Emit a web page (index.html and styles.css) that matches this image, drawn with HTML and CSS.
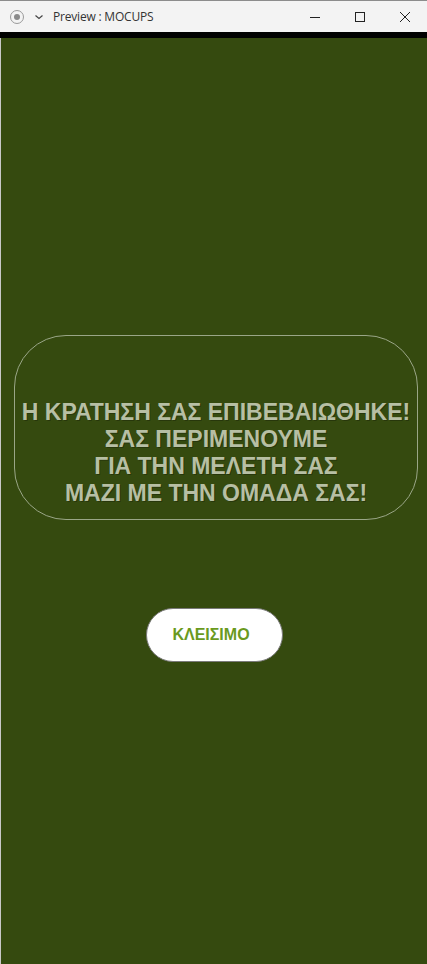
FILE: index.html
```html
<!DOCTYPE html>
<html lang="el">
<head>
<meta charset="utf-8">
<title>Preview : MOCUPS</title>
<link rel="stylesheet" href="styles.css">
</head>
<body>
<div class="window">
  <header class="titlebar">
    <div class="tb-left">
      <svg class="tb-icon" width="16" height="16" viewBox="0 0 16 16"><circle cx="8" cy="8" r="6.5" fill="none" stroke="#9a9a9a" stroke-width="1"/><circle cx="8" cy="8" r="3" fill="#8a8a8a"/></svg>
      <svg class="tb-chevron" width="10" height="10" viewBox="0 0 10 10"><path d="M1.5 3.5 L5 6.5 L8.5 3.5" fill="none" stroke="#444" stroke-width="1.2"/></svg>
      <span class="tb-title">Preview : MOCUPS</span>
    </div>
    <div class="tb-controls">
      <svg width="12" height="12" viewBox="0 0 12 12"><path d="M1 6.5 H11" stroke="#222" stroke-width="1"/></svg>
      <svg width="12" height="12" viewBox="0 0 12 12"><rect x="1.5" y="1.5" width="9" height="9" fill="none" stroke="#222" stroke-width="1"/></svg>
      <svg width="12" height="12" viewBox="0 0 12 12"><path d="M1 1 L11 11 M11 1 L1 11" stroke="#222" stroke-width="1"/></svg>
    </div>
  </header>
  <div class="blackbar"></div>
  <main class="screen">
    <section class="message">
      <p>Η ΚΡΑΤΗΣΗ ΣΑΣ ΕΠΙΒΕΒΑΙΩΘΗΚΕ!<br>ΣΑΣ ΠΕΡΙΜΕΝΟΥΜΕ<br>ΓΙΑ ΤΗΝ ΜΕΛΕΤΗ ΣΑΣ<br>ΜΑΖΙ ΜΕ ΤΗΝ ΟΜΑΔΑ ΣΑΣ!</p>
    </section>
    <button class="close-btn">ΚΛΕΙΣΙΜΟ</button>
  </main>
</div>
</body>
</html>
```
FILE: styles.css
```css
html, body {
  margin: 0;
  padding: 0;
  width: 427px;
  height: 964px;
  overflow: hidden;
  background: #354a0f;
}
.window {
  display: flex;
  flex-direction: column;
  height: 964px;
}
.titlebar {
  height: 32px;
  box-sizing: border-box;
  border-top: 1px solid #8c8c8c;
  background: #f3f3f3;
  display: flex;
  align-items: center;
  justify-content: space-between;
  font-family: "Open Sans", "Noto Sans", sans-serif;
}
.tb-left {
  display: flex;
  align-items: center;
  padding-left: 9px;
}
.tb-icon { margin-top: 1px; }
.tb-chevron { margin-left: 9px; }
.tb-title {
  margin-left: 9px;
  font-size: 12px;
  color: #333;
  letter-spacing: -0.2px;
}
.tb-controls {
  display: flex;
  align-items: center;
  gap: 33px;
  padding-right: 16px;
  margin-top: 1px;
}
.blackbar {
  height: 6px;
  background: #000;
}
.screen {
  flex: 1;
  display: flex;
  flex-direction: column;
  align-items: center;
  border-left: 1px solid #c8c8c8;
}
.message {
  margin-top: 297px;
  margin-left: 13px;
  width: 404px;
  height: 185px;
  box-sizing: border-box;
  border: 1px solid #9aa687;
  border-radius: 52px;
  display: flex;
  align-items: flex-end;
  justify-content: center;
  padding-bottom: 12px;
  align-self: flex-start;
}
.message p {
  margin: 0;
  font-family: "Liberation Sans", Arial, sans-serif;
  font-weight: bold;
  font-size: 23px;
  line-height: 27px;
  color: #b7bfa4;
  text-align: center;
  white-space: nowrap;
  text-shadow: 1px 1px 0 rgba(0,0,0,0.25);
}
.close-btn {
  margin-top: 88px;
  margin-left: 0;
  width: 137px;
  height: 54px;
  border: 1px solid #7a7a7a;
  border-radius: 27px;
  background: #fff;
  font-family: "Liberation Sans", Arial, sans-serif;
  font-weight: bold;
  font-size: 16px;
  color: #6a9a1e;
  padding: 0 6px 0 0;
}
```
